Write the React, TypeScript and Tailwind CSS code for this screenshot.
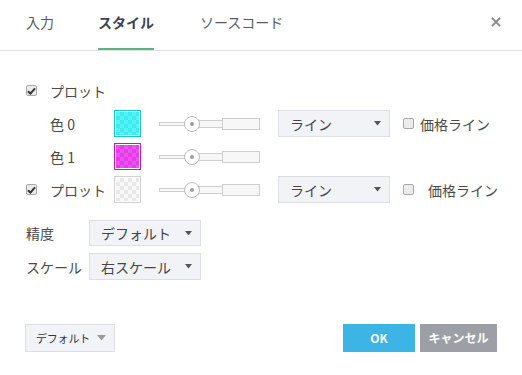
import { useState } from 'react'

const FONT = "font-['Noto_Sans_CJK_JP','Noto_Sans',sans-serif]"

function Check({ checked }: { checked: boolean }) {
  return (
    <span className="w-[11px] h-[11px] border border-[#a9a9a9] rounded-[2px] bg-[#ececec] flex items-center justify-center shrink-0">
      {checked && (
        <svg width="9" height="8" viewBox="0 0 9 8">
          <path d="M1 4.2 L3.4 6.6 L8 1.4" fill="none" stroke="#333" strokeWidth="2" />
        </svg>
      )}
    </span>
  )
}

function Caret({ color = '#555', w = 7 }: { color?: string; w?: number }) {
  return (
    <svg width={w} height={w / 2 + 1} viewBox="0 0 8 5">
      <path d="M0 0 L8 0 L4 5 Z" fill={color} />
    </svg>
  )
}

function Select({ value, width = 'w-[112px]', height = 'h-[27px]' }: { value: string; width?: string; height?: string }) {
  return (
    <div className={`${width} ${height} bg-[#f2f3f7] border border-[#dcdfe5] flex items-center justify-between pl-[11px] pr-[8px] text-[14px] text-[#444]`}>
      <span>{value}</span>
      <Caret />
    </div>
  )
}

function Slider() {
  return (
    <div className="flex items-center w-[101px] h-[20px]">
      <div className="w-[26px] h-[4px] bg-[#f7f7f7] border border-[#cfcfcf] border-r-0" />
      <div className="w-[16px] h-[16px] rounded-full border border-[#b9bcc4] bg-white flex items-center justify-center -mx-[1px] relative z-10">
        <div className="w-[4px] h-[4px] rounded-full bg-[#9a9ca3]" />
      </div>
      <div className="w-[23px] h-[8px] bg-[#f7f7f7] border border-[#cfcfcf] border-x-0" />
      <div className="w-[38px] h-[12px] bg-[#f7f7f7] border border-[#cfcfcf]" />
    </div>
  )
}

function Swatch({ kind }: { kind: 'cyan' | 'magenta' | 'empty' }) {
  const border =
    kind === 'cyan' ? 'border-[#14c8d2]' : kind === 'magenta' ? 'border-[#c810d0]' : 'border-[#d0d0d0]'
  const fill =
    kind === 'cyan'
      ? 'bg-[conic-gradient(#3ee8ee_25%,#52f4f4_0_50%,#3ee8ee_0_75%,#52f4f4_0)]'
      : kind === 'magenta'
      ? 'bg-[conic-gradient(#e23ee6_25%,#f050f2_0_50%,#e23ee6_0_75%,#f050f2_0)]'
      : 'bg-[conic-gradient(#e8e8e8_25%,#f8f8f8_0_50%,#e8e8e8_0_75%,#f8f8f8_0)]'
  return (
    <div className={`w-[27px] h-[27px] border ${border} p-[1px] bg-white shrink-0`}>
      <div className={`w-full h-full ${fill} bg-[length:8px_8px]`} />
    </div>
  )
}

export default function App() {
  const [tab] = useState('style')

  return (
    <div className={`${FONT} w-[522px] h-[375px] bg-white text-[#4a4a4a] relative overflow-hidden`}>
      {/* タブ */}
      <div className="h-[51px] border-b border-[#e0e0e0] flex items-start pl-[26px] relative">
        <div className="pt-[11px] text-[14px] leading-[22px] text-[#5a5a5a]">入力</div>
        <div className="ml-[44px] pt-[11px] h-[50px] relative text-[14px] leading-[22px] font-bold text-[#3d4350]">
          スタイル
          {tab === 'style' && <div className="absolute left-0 right-0 bottom-0 h-[2px] bg-[#55b685]" />}
        </div>
        <div className="ml-[46px] pt-[11px] text-[14px] leading-[22px] text-[#5a5a5a]">ソースコード</div>
        <div className="ml-auto mr-[21px] pt-[17px]">
          <svg width="10" height="10" viewBox="0 0 10 10">
            <path d="M1 1 L9 9 M9 1 L1 9" stroke="#8c8e94" strokeWidth="2" />
          </svg>
        </div>
      </div>

      {/* 本体 */}
      <div className="pl-[26px] pt-[26px] flex flex-col text-[14px] leading-[20px]">
        <div className="h-[27px] flex items-center">
          <Check checked />
          <span className="ml-[13px]">プロット</span>
        </div>

        <div className="mt-[6px] h-[27px] flex items-center">
          <span className="w-[88px] pl-[24px]">色 0</span>
          <Swatch kind="cyan" />
          <div className="ml-[18px]"><Slider /></div>
          <div className="ml-[18px]"><Select value="ライン" /></div>
          <div className="ml-[13px] flex items-center">
            <Check checked={false} />
            <span className="ml-[6px]">価格ライン</span>
          </div>
        </div>

        <div className="mt-[6px] h-[27px] flex items-center">
          <span className="w-[88px] pl-[24px]">色 1</span>
          <Swatch kind="magenta" />
          <div className="ml-[18px]"><Slider /></div>
        </div>

        <div className="mt-[6px] h-[27px] flex items-center">
          <div className="w-[88px] flex items-center">
            <Check checked />
            <span className="ml-[13px]">プロット</span>
          </div>
          <Swatch kind="empty" />
          <div className="ml-[18px]"><Slider /></div>
          <div className="ml-[18px]"><Select value="ライン" /></div>
          <div className="ml-[13px] flex items-center">
            <Check checked={false} />
            <span className="ml-[14px]">価格ライン</span>
          </div>
        </div>

        <div className="mt-[17px] h-[26px] flex items-center">
          <span className="w-[63px]">精度</span>
          <Select value="デフォルト" height="h-[26px]" />
        </div>

        <div className="mt-[7px] h-[27px] flex items-center">
          <span className="w-[63px]">スケール</span>
          <Select value="右スケール" />
        </div>
      </div>

      {/* フッター */}
      <div className="absolute left-[25px] right-[25px] top-[324px] flex items-center">
        <div className="w-[90px] h-[28px] bg-[#f2f3f7] border border-[#dcdfe5] flex items-center pl-[10px] gap-[7px] text-[11px] tracking-[-0.2px] text-[#333]">
          <span>デフォルト</span>
          <Caret color="#999" w={9} />
        </div>
        <div className="ml-auto w-[72px] h-[28px] bg-[#3cb4e5] text-white text-[12px] font-bold flex items-center justify-center">
          OK
        </div>
        <div className="ml-[5px] w-[77px] h-[28px] bg-[#9d9fa6] text-white text-[12px] font-bold flex items-center justify-center">
          キャンセル
        </div>
      </div>
    </div>
  )
}
